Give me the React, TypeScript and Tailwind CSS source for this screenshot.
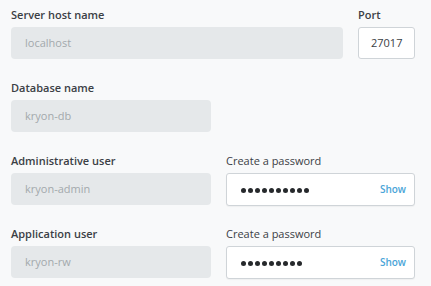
import React from "react";

const font = { fontFamily: '"Open Sans", "Noto Sans", sans-serif' };

function Label({ children, weight = "font-semibold" }: { children: React.ReactNode; weight?: string }) {
  return (
    <div className={`h-4 leading-4 text-[11px] text-[#3b4045] ${weight} mb-1`}>{children}</div>
  );
}

function Disabled({ value, w }: { value: string; w: string }) {
  return (
    <div className={`${w} h-8 rounded-[4px] bg-[#e5e8ea] flex items-center pl-[14px] text-[11px] text-[#a3a8ac]`}>
      {value}
    </div>
  );
}

function Password({ n }: { n: number }) {
  return (
    <div className="w-[189px] h-[33px] rounded-[3px] bg-white border border-[#cfd4d8] flex items-center pl-[14px] pr-[8px] shadow-[0_1px_1px_rgba(0,0,0,0.04)]">
      <div className="flex gap-[2px] items-center mt-[2px]">
        {Array.from({ length: n }).map((_, i) => (
          <span key={i} className="block w-[5px] h-[5px] rounded-full bg-[#26292c]" />
        ))}
      </div>
      <span className="ml-auto text-[10px] font-semibold text-[#4aa5d8]">Show</span>
    </div>
  );
}

export default function App() {
  return (
    <div className="w-[431px] h-[286px] bg-[#f8f9fa] pl-[11px] pt-[7px] flex flex-col gap-[21px]" style={font}>
      <div className="flex gap-[15px]">
        <div>
          <Label>Server host name</Label>
          <Disabled value="localhost" w="w-[332px]" />
        </div>
        <div>
          <Label>Port</Label>
          <div className="w-[57px] h-8 rounded-[3px] bg-white border border-[#cfd4d8] flex items-center pl-[12px] text-[11px] text-[#3b4045]">
            27017
          </div>
        </div>
      </div>
      <div>
        <Label>Database name</Label>
        <Disabled value="kryon-db" w="w-[200px]" />
      </div>
      <div className="flex gap-[15px]">
        <div>
          <Label>Administrative user</Label>
          <Disabled value="kryon-admin" w="w-[200px]" />
        </div>
        <div>
          <Label weight="font-normal">Create a password</Label>
          <Password n={10} />
        </div>
      </div>
      <div className="flex gap-[15px] -mt-px">
        <div>
          <Label>Application user</Label>
          <Disabled value="kryon-rw" w="w-[200px]" />
        </div>
        <div>
          <Label weight="font-normal">Create a password</Label>
          <Password n={9} />
        </div>
      </div>
    </div>
  );
}
